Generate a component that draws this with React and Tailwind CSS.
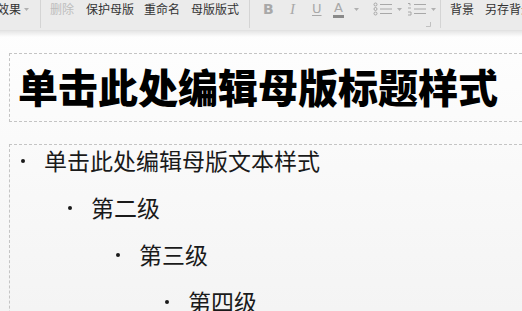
import React from 'react';

const Caret = () => (
  <svg width="5" height="3" viewBox="0 0 5 3" className="shrink-0"><path d="M0 0h5L2.5 3z" fill="#b0b0b0" /></svg>
);

const Sep = () => <div className="w-px h-[28px] bg-[#d4d4d4] self-start shrink-0" />;

const BulletIcon = () => (
  <svg width="20" height="14" viewBox="0 0 20 14" fill="none" stroke="#a8a8a8" strokeWidth="1">
    <circle cx="2.5" cy="2.5" r="1.5" />
    <circle cx="2.5" cy="7" r="1.5" />
    <circle cx="2.5" cy="11.5" r="1.5" />
    <path d="M7 2.5h12M7 7h12M7 11.5h12" />
  </svg>
);

const NumberIcon = () => (
  <svg width="20" height="14" viewBox="0 0 20 14" fill="none" stroke="#a8a8a8" strokeWidth="1">
    <path d="M1 1.5h2v2M1 6h3M1 10h3v3H1" />
    <path d="M7 2.5h12M7 7h12M7 11.5h12" />
  </svg>
);

const levels = [
  { text: '单击此处编辑母版文本样式', pad: 'pl-[11px]' },
  { text: '第二级', pad: 'pl-[58px]' },
  { text: '第三级', pad: 'pl-[106px]' },
  { text: '第四级', pad: 'pl-[155px]' },
];

export default function App() {
  return (
    <div className="w-[522px] h-[311px] overflow-hidden bg-gradient-to-b from-white to-[#f4f4f4] font-['Noto_Sans_CJK_SC','Microsoft_YaHei',sans-serif] text-[#222]">
      <div className="h-[31px] bg-[#ebebeb] flex items-start text-[12px] leading-[18px] text-[#333] border-b border-[#e2e2e2] whitespace-nowrap">
        <div className="flex items-center gap-[3px] w-[43px] -ml-[3px] shrink-0">
          <span>效果</span>
          <Caret />
        </div>
        <Sep />
        <div className="flex items-center pl-[9px] shrink-0">
          <span className="text-[#bdbdbd] w-[36px]">删除</span>
          <span className="w-[58px]">保护母版</span>
          <span className="w-[47px]">重命名</span>
          <span className="w-[58px]">母版版式</span>
        </div>
        <Sep />
        <div className="flex items-center h-[18px] text-[#a8a8a8] pl-[13px] relative w-[190px] shrink-0">
          <span className="font-['DejaVu_Sans',sans-serif] font-bold text-[14px] w-[27px]">B</span>
          <span className="font-['Liberation_Serif',serif] italic text-[15px] w-[22px]">I</span>
          <span className="font-['DejaVu_Sans',sans-serif] text-[13px] underline underline-offset-2 w-[21px]">U</span>
          <span className="flex items-center w-[40px]">
            <span className="font-['DejaVu_Sans',sans-serif] text-[13px] border-b-[3px] border-[#8a8a8a] leading-[14px] px-[1px]">A</span>
            <span className="ml-[10px]"><Caret /></span>
          </span>
          <span className="flex items-center gap-[4px] w-[34px]"><BulletIcon /><Caret /></span>
          <span className="flex items-center gap-[4px]"><NumberIcon /><Caret /></span>
          <svg width="5" height="5" viewBox="0 0 5 5" className="absolute right-[9px] top-[22px]"><path d="M4.5 0v4.5H0" stroke="#c0c0c0" fill="none" /></svg>
        </div>
        <Sep />
        <div className="flex items-center pl-[9px] gap-[11px] shrink-0">
          <span>背景</span>
          <span>另存背景</span>
        </div>
      </div>
      <div className="h-[6px] bg-gradient-to-b from-[#e6e6e6] to-transparent" />
      <div className="pl-[9px] pt-[16px]">
        <div className="h-[69px] border border-dashed border-r-0 border-[#c4c4c4] flex items-center pl-[8px] pb-[3px]">
          <h1 className="text-[40px] font-black text-black leading-none whitespace-nowrap font-['Noto_Sans_CJK_SC',sans-serif]">
            单击此处编辑母版标题样式
          </h1>
        </div>
        <div className="mt-[22px] border-t border-l border-dashed border-[#c4c4c4] h-[200px]">
          <div className="-mt-[8px]">
            {levels.map((l) => (
              <div key={l.text} className={`flex items-center h-[47px] ${l.pad} text-[23px] leading-[23px] text-[#1a1a1a]`}>
                <span className="w-[23px] shrink-0 flex items-center">
                  <span className="w-[4px] h-[4px] rounded-full bg-[#1a1a1a]" />
                </span>
                <span className="whitespace-nowrap">{l.text}</span>
              </div>
            ))}
          </div>
        </div>
      </div>
    </div>
  );
}
